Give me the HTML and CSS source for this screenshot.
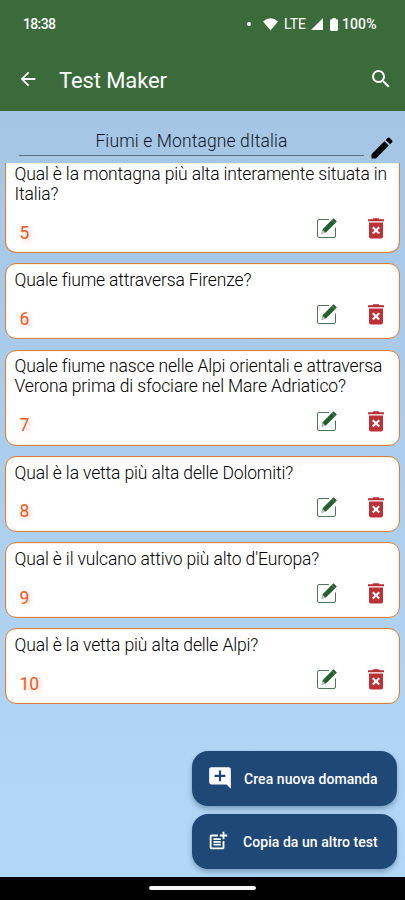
FILE: index.html
```html
<!DOCTYPE html>
<html lang="it">
<head>
<meta charset="utf-8">
<title>Test Maker</title>
<link rel="stylesheet" href="styles.css">
</head>
<body>
<svg class="defs" aria-hidden="true">
  <symbol id="edit" viewBox="0 0 22 22">
    <path d="M13 2.500H3q-1.500 0-1.500 1.500V19q0 1.500 1.500 1.500H18q1.500 0 1.500-1.500V10.500" fill="none" stroke="#4b7a54" stroke-width="1"/>
    <path d="M5.500 16.700l1.300-4.700L17.500 1.300l3.400 3.300L10.200 15.300z" fill="#24602f"/>
    <path d="M5.500 16.700l1.100-3.900 2.800 2.700z" fill="#b8c6b9"/>
    <path d="M15.700 2.900l3.500 3.500" stroke="#6f9674" stroke-width=".7"/>
  </symbol>
  <symbol id="trash" viewBox="0 0 16 21">
    <path d="M0 1.300h4.500L5.300.3h5.400l.8 1h4.500v2H0z" fill="#b92e34"/>
    <path d="M1 4.600h14v13.800q0 2-2 2H3q-2 0-2-2z" fill="#bd3036"/>
    <path d="M4.800 9.200l6.400 6.400M11.200 9.200l-6.400 6.400" stroke="#fff" stroke-width="2.100"/>
  </symbol>
</svg>
<div class="screen">
  <header>
    <div class="status">
      <span class="clock">18:38</span>
      <i class="dot"></i>
      <svg class="wifi" viewBox="0 0 15 13"><path d="M0 3.400Q7.500-2.800 15 3.400L7.500 12.600z"/></svg>
      <span class="lte">LTE</span>
      <svg class="signal" viewBox="0 0 12 12"><path d="M12 0v12H0z"/></svg>
      <svg class="battery" viewBox="0 0 8 13"><path d="M2.300 0h3.400v1.200h1.100Q8 1.200 8 2.400v9.200Q8 13 6.800 13H1.200Q0 13 0 11.600V2.400Q0 1.200 1.200 1.200h1.100z"/></svg>
      <span class="percent">100%</span>
    </div>
    <div class="toolbar">
      <svg class="back" viewBox="0 0 24 24"><path d="M20 11H7.830l5.590-5.590L12 4l-8 8 8 8 1.410-1.410L7.830 13H20v-2z"/></svg>
      <h1>Test Maker</h1>
      <svg class="search" viewBox="0 0 24 24"><path d="M15.500 14h-.79l-.28-.27A6.470 6.470 0 0 0 16 9.500 6.500 6.500 0 1 0 9.500 16c1.610 0 3.090-.59 4.230-1.570l.27.28v.79l5 4.990L20.490 19l-4.990-5zm-6 0C7.010 14 5 11.990 5 9.500S7.010 5 9.500 5 14 7.010 14 9.500 11.990 14 9.500 14z"/></svg>
    </div>
  </header>
  <main>
    <div class="title-row">
      <div class="field">Fiumi e Montagne dItalia</div>
      <svg class="pencil" viewBox="0 0 24 24"><path d="M3 17.250V21h3.750L17.810 9.940l-3.750-3.750L3 17.250zM20.710 7.040a1 1 0 0 0 0-1.410l-2.340-2.340a1 1 0 0 0-1.410 0l-1.830 1.830 3.750 3.750 1.830-1.830z"/></svg>
    </div>
    <div class="list">
      <article class="card first"><p>Qual è la montagna più alta interamente situata in<br>Italia?</p><div class="foot"><b>5</b><svg class="edit"><use href="#edit"/></svg><svg class="trash"><use href="#trash"/></svg></div></article>
      <article class="card"><p>Quale fiume attraversa Firenze?</p><div class="foot"><b>6</b><svg class="edit"><use href="#edit"/></svg><svg class="trash"><use href="#trash"/></svg></div></article>
      <article class="card"><p>Quale fiume nasce nelle Alpi orientali e attraversa<br>Verona prima di sfociare nel Mare Adriatico?</p><div class="foot"><b>7</b><svg class="edit"><use href="#edit"/></svg><svg class="trash"><use href="#trash"/></svg></div></article>
      <article class="card"><p>Qual è la vetta più alta delle Dolomiti?</p><div class="foot"><b>8</b><svg class="edit"><use href="#edit"/></svg><svg class="trash"><use href="#trash"/></svg></div></article>
      <article class="card"><p>Qual è il vulcano attivo più alto d'Europa?</p><div class="foot"><b>9</b><svg class="edit"><use href="#edit"/></svg><svg class="trash"><use href="#trash"/></svg></div></article>
      <article class="card"><p>Qual è la vetta più alta delle Alpi?</p><div class="foot"><b>10</b><svg class="edit"><use href="#edit"/></svg><svg class="trash"><use href="#trash"/></svg></div></article>
    </div>
    <div class="actions">
      <button><svg class="comment" viewBox="0 0 24 24"><path d="M22 4c0-1.100-.9-2-2-2H4c-1.100 0-2 .9-2 2v12c0 1.100.9 2 2 2h14l4 4V4zm-5 7h-4v4h-2v-4H7V9h4V5h2v4h4v2z"/></svg><span>Crea nuova domanda</span></button>
      <button><svg class="post" viewBox="0 0 24 24"><path d="M17 19.220H5V7h7V5H5c-1.100 0-2 .9-2 2v12c0 1.100.9 2 2 2h12c1.100 0 2-.9 2-2v-7h-2v7.220z"/><path d="M19 2h-2v3h-3v2h3v3h2V7h3V5h-3V2zM7 9h8v2H7zM7 12h8v2H7zM7 15h8v2H7z"/></svg><span>Copia da un altro test</span></button>
    </div>
  </main>
  <nav><i></i></nav>
</div>
</body>
</html>
```
FILE: styles.css
```css
* { box-sizing: border-box; }
body { margin: 0; font-family: Roboto, sans-serif; }
.defs { position: absolute; width: 0; height: 0; }
svg { display: block; flex: none; }
.screen { width: 405px; height: 900px; display: flex; flex-direction: column; overflow: hidden; }
header { height: 111px; flex: none; background: #3c6b3b; color: #fff; fill: #fff; }
.status { height: 48px; display: flex; align-items: center; padding: 0 28px 0 23px; font-size: 14px; line-height: 16px; font-weight: 500; }
.clock { width: 224px; letter-spacing: -.65px; }
.dot { width: 4px; height: 4px; border-radius: 50%; background: #fff; margin-right: 12px; }
.wifi { width: 15px; height: 13px; margin-right: 6px; }
.lte { width: 23px; margin-right: 4px; font-weight: 400; }
.signal { width: 12px; height: 12px; margin-right: 7px; }
.battery { width: 8px; height: 13px; margin-right: 4px; }
.percent { letter-spacing: .1px; }
.toolbar { height: 63px; display: flex; align-items: center; padding: 0 12px 0 17px; }
.back { width: 22px; height: 22px; margin-bottom: 1px; }
h1 { margin: 3px 0 0 20px; font-size: 22px; font-weight: 400; line-height: 28px; flex: 1; letter-spacing: -.1px; }
.search { width: 24px; height: 24px; margin-bottom: 2px; }
main { height: 766px; flex: none; display: flex; flex-direction: column; background: linear-gradient(#a5c5e5, #b3d8f7); }
.title-row { height: 52px; flex: none; display: flex; align-items: flex-start; padding: 19px 9px 0 19px; }
.field { width: 345px; flex: none; height: 26px; border-bottom: 1px solid #5c6e7f; font-size: 17.5px; font-weight: 350; line-height: 22px; letter-spacing: .12px; text-align: center; color: #10161d; }
.pencil { width: 28px; height: 28px; margin: 4px 0 0 4px; }
.list { display: flex; flex-direction: column; gap: 10.3px; height: 560px; flex: none; overflow: hidden; padding: 0 5px; }
.card { flex: none; border: 1.5px solid #d97f42; border-radius: 11px; background: #fff; box-shadow: inset 0 0 0 .5px #ffe4b8; height: 76px; padding: 6px 8.5px 0; display: flex; flex-direction: column; justify-content: space-between; }
.card:nth-child(3) { height: 96px; padding-top: 5px; }
.card.first { height: 90px; border-top: 0; border-radius: 0 0 11px 11px; padding-top: 1px; }
p { margin: 0; font-size: 17.5px; line-height: 20px; font-weight: 350; letter-spacing: -.14px; color: #000; white-space: nowrap; }
.foot { height: 35px; display: flex; align-items: flex-start; padding: 0 7px 0 5px; }
.foot b { flex: 1; margin-top: 5.5px; font-size: 17.5px; line-height: 20px; font-weight: 380; color: #f05a26; text-shadow: 2px 2px 5px #ffc7b0; }
.edit { width: 22px; height: 22px; margin-right: 30px; }
.trash { width: 16px; height: 21px; margin-top: 1px; }
.actions { display: flex; flex-direction: column; gap: 8px; width: 205px; margin: 27.5px 8px 0 auto; }
button { height: 55px; border: 0; border-radius: 16px; background: #1f4876; color: #fff; fill: #fff; display: flex; align-items: center; padding: 0 0 0 15px; font: 500 14px/20px Roboto, sans-serif; letter-spacing: .06px; box-shadow: 0 3px 5px #38587d73; white-space: nowrap; }
button span { padding-top: 1px; }
.comment { width: 26px; height: 26px; margin-right: 11px; }
.post { width: 22px; height: 22px; margin-right: 14px; }
nav { height: 23px; flex: none; background: #000; display: flex; justify-content: center; align-items: center; padding-bottom: 1px; }
nav i { width: 107px; height: 4px; border-radius: 2px; background: #f4f4f4; }
```
